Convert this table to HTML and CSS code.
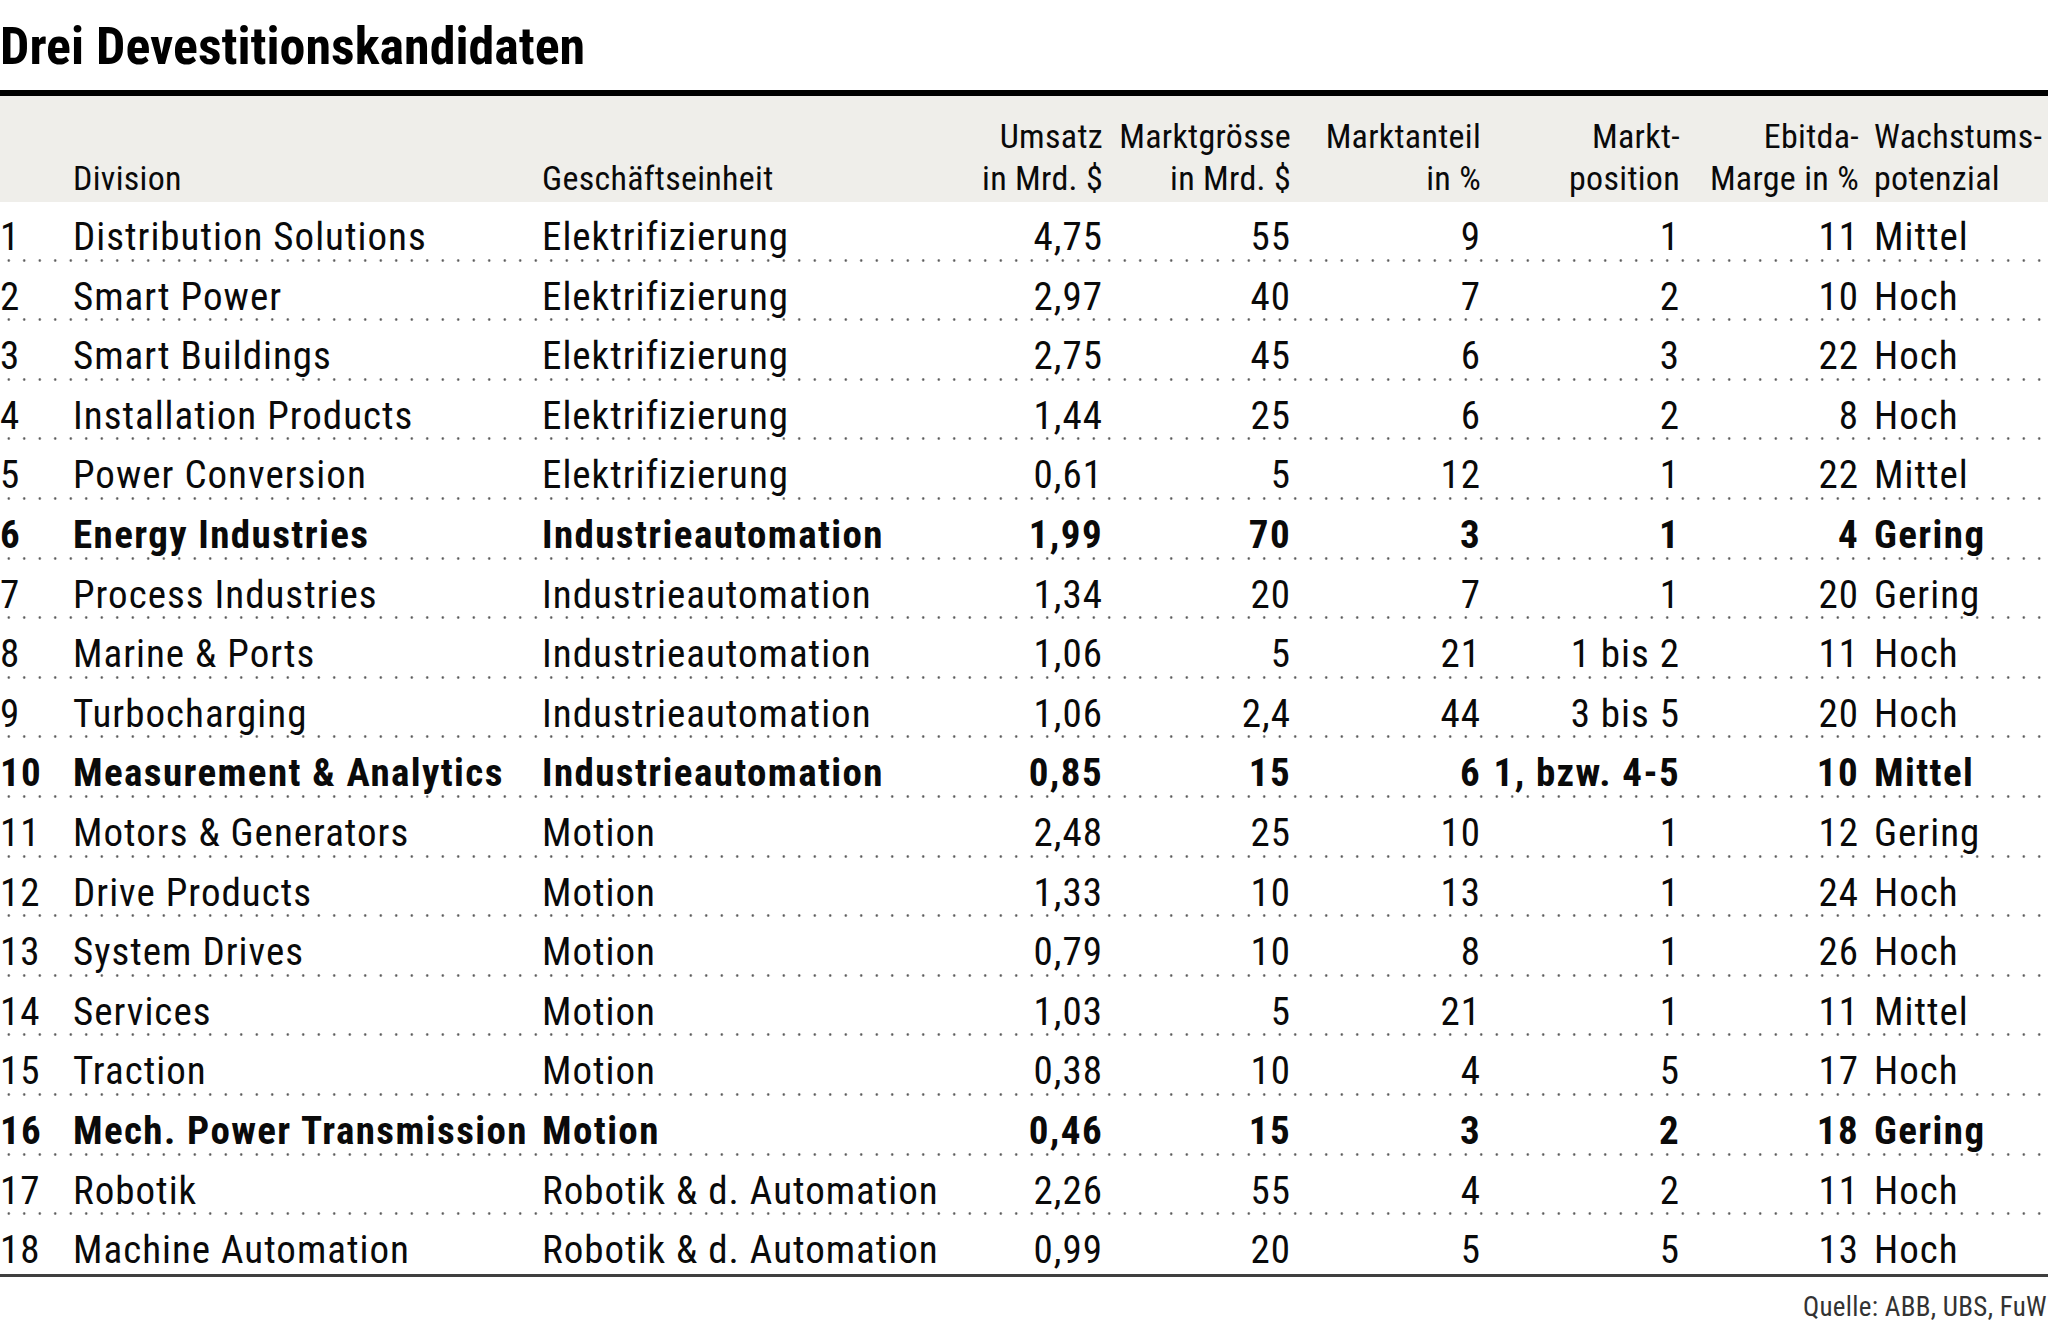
FILE: index.html
```html
<!DOCTYPE html>
<html lang="de">
<head>
<meta charset="utf-8">
<title>Drei Devestitionskandidaten</title>
<link rel="stylesheet" href="styles.css">
</head>
<body>
<div class="page">
  <h1 class="title">Drei Devestitionskandidaten</h1>
  <div class="rule"></div>
  <div class="table">
    <div class="head">
      <div class="c num"></div>
      <div class="c txt">Division</div>
      <div class="c txt">Geschäftseinheit</div>
      <div class="c r">Umsatz<br>in Mrd. $</div>
      <div class="c r">Marktgrösse<br>in Mrd. $</div>
      <div class="c r">Marktanteil<br>in %</div>
      <div class="c r">Markt-<br>position</div>
      <div class="c r">Ebitda-<br>Marge in %</div>
      <div class="c last">Wachstums-<br>potenzial</div>
    </div>
    <div class="row"><div class="c num">1</div><div class="c txt">Distribution Solutions</div><div class="c txt">Elektrifizierung</div><div class="c r">4,75</div><div class="c r">55</div><div class="c r">9</div><div class="c r">1</div><div class="c r">11</div><div class="c last">Mittel</div></div>
    <div class="row"><div class="c num">2</div><div class="c txt">Smart Power</div><div class="c txt">Elektrifizierung</div><div class="c r">2,97</div><div class="c r">40</div><div class="c r">7</div><div class="c r">2</div><div class="c r">10</div><div class="c last">Hoch</div></div>
    <div class="row"><div class="c num">3</div><div class="c txt">Smart Buildings</div><div class="c txt">Elektrifizierung</div><div class="c r">2,75</div><div class="c r">45</div><div class="c r">6</div><div class="c r">3</div><div class="c r">22</div><div class="c last">Hoch</div></div>
    <div class="row"><div class="c num">4</div><div class="c txt">Installation Products</div><div class="c txt">Elektrifizierung</div><div class="c r">1,44</div><div class="c r">25</div><div class="c r">6</div><div class="c r">2</div><div class="c r">8</div><div class="c last">Hoch</div></div>
    <div class="row"><div class="c num">5</div><div class="c txt">Power Conversion</div><div class="c txt">Elektrifizierung</div><div class="c r">0,61</div><div class="c r">5</div><div class="c r">12</div><div class="c r">1</div><div class="c r">22</div><div class="c last">Mittel</div></div>
    <div class="row bold"><div class="c num">6</div><div class="c txt">Energy Industries</div><div class="c txt">Industrieautomation</div><div class="c r">1,99</div><div class="c r">70</div><div class="c r">3</div><div class="c r">1</div><div class="c r">4</div><div class="c last">Gering</div></div>
    <div class="row"><div class="c num">7</div><div class="c txt">Process Industries</div><div class="c txt">Industrieautomation</div><div class="c r">1,34</div><div class="c r">20</div><div class="c r">7</div><div class="c r">1</div><div class="c r">20</div><div class="c last">Gering</div></div>
    <div class="row"><div class="c num">8</div><div class="c txt">Marine &amp; Ports</div><div class="c txt">Industrieautomation</div><div class="c r">1,06</div><div class="c r">5</div><div class="c r">21</div><div class="c r">1 bis 2</div><div class="c r">11</div><div class="c last">Hoch</div></div>
    <div class="row"><div class="c num">9</div><div class="c txt">Turbocharging</div><div class="c txt">Industrieautomation</div><div class="c r">1,06</div><div class="c r">2,4</div><div class="c r">44</div><div class="c r">3 bis 5</div><div class="c r">20</div><div class="c last">Hoch</div></div>
    <div class="row bold"><div class="c num">10</div><div class="c txt">Measurement &amp; Analytics</div><div class="c txt">Industrieautomation</div><div class="c r">0,85</div><div class="c r">15</div><div class="c r">6</div><div class="c r">1, bzw. 4-5</div><div class="c r">10</div><div class="c last">Mittel</div></div>
    <div class="row"><div class="c num">11</div><div class="c txt">Motors &amp; Generators</div><div class="c txt">Motion</div><div class="c r">2,48</div><div class="c r">25</div><div class="c r">10</div><div class="c r">1</div><div class="c r">12</div><div class="c last">Gering</div></div>
    <div class="row"><div class="c num">12</div><div class="c txt">Drive Products</div><div class="c txt">Motion</div><div class="c r">1,33</div><div class="c r">10</div><div class="c r">13</div><div class="c r">1</div><div class="c r">24</div><div class="c last">Hoch</div></div>
    <div class="row"><div class="c num">13</div><div class="c txt">System Drives</div><div class="c txt">Motion</div><div class="c r">0,79</div><div class="c r">10</div><div class="c r">8</div><div class="c r">1</div><div class="c r">26</div><div class="c last">Hoch</div></div>
    <div class="row"><div class="c num">14</div><div class="c txt">Services</div><div class="c txt">Motion</div><div class="c r">1,03</div><div class="c r">5</div><div class="c r">21</div><div class="c r">1</div><div class="c r">11</div><div class="c last">Mittel</div></div>
    <div class="row"><div class="c num">15</div><div class="c txt">Traction</div><div class="c txt">Motion</div><div class="c r">0,38</div><div class="c r">10</div><div class="c r">4</div><div class="c r">5</div><div class="c r">17</div><div class="c last">Hoch</div></div>
    <div class="row bold"><div class="c num">16</div><div class="c txt">Mech. Power Transmission</div><div class="c txt">Motion</div><div class="c r">0,46</div><div class="c r">15</div><div class="c r">3</div><div class="c r">2</div><div class="c r">18</div><div class="c last">Gering</div></div>
    <div class="row"><div class="c num">17</div><div class="c txt">Robotik</div><div class="c txt">Robotik &amp; d. Automation</div><div class="c r">2,26</div><div class="c r">55</div><div class="c r">4</div><div class="c r">2</div><div class="c r">11</div><div class="c last">Hoch</div></div>
    <div class="row end"><div class="c num">18</div><div class="c txt">Machine Automation</div><div class="c txt">Robotik &amp; d. Automation</div><div class="c r">0,99</div><div class="c r">20</div><div class="c r">5</div><div class="c r">5</div><div class="c r">13</div><div class="c last">Hoch</div></div>
    <div class="table-end"></div>
  </div>
  <div class="source">Quelle: ABB, UBS, FuW</div>
</div>
</body>
</html>
```
FILE: styles.css
```css
html, body {
  margin: 0;
  padding: 0;
  background: #ffffff;
}
body {
  width: 2048px;
  height: 1344px;
  overflow: hidden;
  color: #0a0a0a;
  font-family: "Roboto Condensed", "Roboto", sans-serif;
  font-stretch: condensed;
}
.page {
  width: 2048px;
}
.title {
  margin: 0 0 17px 0;
  padding-top: 21px;
  height: 52px;
  font-size: 52px;
  line-height: 52px;
  font-weight: 700;
  letter-spacing: 0;
  white-space: nowrap;
  color: #000;
}
.rule {
  height: 6px;
  background: #000;
}
.table {
  width: 2048px;
}
.head,
.row {
  display: grid;
  grid-template-columns: 73px 469px 408px 153px 188px 190px 199px 179px 189px;
  white-space: nowrap;
}
.head {
  height: 106px;
  box-sizing: border-box;
  padding-bottom: 3px;
  background: #efeeea;
  align-items: end;
  font-size: 34px;
  line-height: 42px;
  letter-spacing: 0.3px;
  font-weight: 400;
}
.row {
  height: 59.6px;
  box-sizing: border-box;
  padding-top: 16px;
  font-size: 39px;
  line-height: 39px;
  letter-spacing: 1px;
  background-image: radial-gradient(circle at center, #5a5a5a 0, #5a5a5a 0.9px, rgba(255,255,255,0) 1.6px);
  background-size: 15.5px 3px;
  background-repeat: repeat-x;
  background-position: 1px 100%;
}
.row.bold {
  font-weight: 700;
  letter-spacing: 1.4px;
}
.row.end {
  background-image: none;
}
.table-end {
  height: 3px;
  margin-top: -1px;
  background: #3f3f3f;
}
.num,
.txt {
  text-align: left;
}
.r {
  text-align: right;
}
.last {
  padding-left: 15px;
  text-align: left;
}
.source {
  margin-top: 17px;
  text-align: right;
  font-size: 27px;
  line-height: 27px;
  color: #333;
  letter-spacing: 0.3px;
  padding-right: 1px;
}
```
